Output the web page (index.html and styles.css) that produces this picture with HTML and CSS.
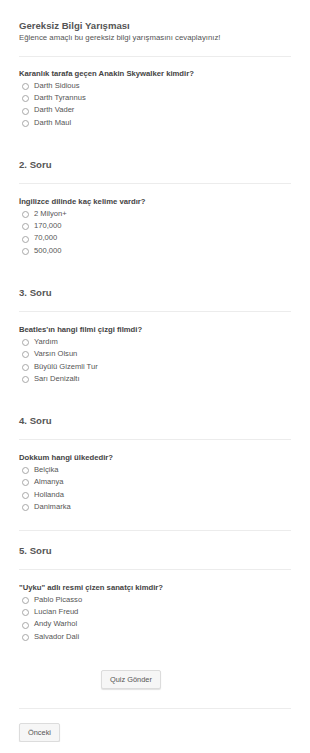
FILE: index.html
```html
<!DOCTYPE html>
<html lang="tr">
  <head>
    <meta charset="UTF-8" />
    <meta name="viewport" content="width=device-width, initial-scale=1.0" />
    <title>Gereksiz Bilgi Yarışması</title>
    <link rel="stylesheet" href="styles.css">
  </head>
  <body>
    <form class="form">
      <div class="form-header">
        <h1>Gereksiz Bilgi Yarışması</h1>
        <p>Eğlence amaçlı bu gereksiz bilgi yarışmasını cevaplayınız!</p>
      </div>
      <hr />

      <div class="question">
        <label class="question-label">Karanlık tarafa geçen Anakin Skywalker kimdir?</label>
        <label class="option"><span class="radio"></span>Darth Sidious</label>
        <label class="option"><span class="radio"></span>Darth Tyrannus</label>
        <label class="option"><span class="radio"></span>Darth Vader</label>
        <label class="option"><span class="radio"></span>Darth Maul</label>
      </div>

      <h2>2. Soru</h2>
      <hr />
      <div class="question">
        <label class="question-label">İngilizce dilinde kaç kelime vardır?</label>
        <label class="option"><span class="radio"></span>2 Milyon+</label>
        <label class="option"><span class="radio"></span>170,000</label>
        <label class="option"><span class="radio"></span>70,000</label>
        <label class="option"><span class="radio"></span>500,000</label>
      </div>

      <h2>3. Soru</h2>
      <hr />
      <div class="question">
        <label class="question-label">Beatles'ın hangi filmi çizgi filmdi?</label>
        <label class="option"><span class="radio"></span>Yardım</label>
        <label class="option"><span class="radio"></span>Varsın Olsun</label>
        <label class="option"><span class="radio"></span>Büyülü Gizemli Tur</label>
        <label class="option"><span class="radio"></span>Sarı Denizaltı</label>
      </div>

      <h2>4. Soru</h2>
      <hr />
      <div class="question">
        <label class="question-label">Dokkum hangi ülkededir?</label>
        <label class="option"><span class="radio"></span>Belçika</label>
        <label class="option"><span class="radio"></span>Almanya</label>
        <label class="option"><span class="radio"></span>Hollanda</label>
        <label class="option"><span class="radio"></span>Danimarka</label>
      </div>

      <hr class="page-break" />
      <h2 class="after-break">5. Soru</h2>
      <hr />
      <div class="question">
        <label class="question-label">"Uyku" adlı resmi çizen sanatçı kimdir?</label>
        <label class="option"><span class="radio"></span>Pablo Picasso</label>
        <label class="option"><span class="radio"></span>Lucian Freud</label>
        <label class="option"><span class="radio"></span>Andy Warhol</label>
        <label class="option"><span class="radio"></span>Salvador Dali</label>
      </div>

      <div class="submit-row">
        <button type="button" class="btn">Quiz Gönder</button>
      </div>
      <hr class="footer-line" />
      <div class="nav-row">
        <button type="button" class="btn">Önceki</button>
      </div>
    </form>
  </body>
</html>
```

FILE: styles.css
```css
body {
  margin: 0;
  background: #fff;
  font-family: "Liberation Sans", Arial, sans-serif;
  color: #555;
}
.form {
  padding: 19px 19px 0;
}
.form-header h1 {
  margin: 0;
  font-size: 9.6px;
  line-height: 13px;
  font-weight: bold;
  color: #555;
}
.form-header p {
  margin: 0;
  font-size: 7.8px;
  line-height: 11px;
  color: #555;
}
hr {
  border: 0;
  border-top: 1px solid #ececec;
  margin: 0;
}
.form-header + hr {
  margin-top: 13px;
}
.question {
  padding-top: 10.5px;
  padding-bottom: 1px;
}
h2 + hr + .question {
  padding-top: 11.5px;
}
.question-label {
  display: block;
  font-size: 7.7px;
  line-height: 11px;
  font-weight: bold;
  color: #444;
  margin-bottom: 1px;
}
.option {
  display: flex;
  align-items: center;
  font-size: 7.6px;
  line-height: 12.4px;
  color: #555;
}
.radio {
  width: 5px;
  height: 5px;
  border: 1px solid #a8a8a8;
  border-radius: 50%;
  margin: 1px 5px 0 3px;
}
h2 {
  margin: 27.5px 0 12.5px;
  font-size: 9.6px;
  line-height: 13px;
  font-weight: bold;
  color: #555;
}
.page-break {
  margin-top: 15px;
}
h2.after-break {
  margin-top: 13px;
}
.submit-row {
  padding: 24px 0 0 82px;
}
.btn {
  height: 19px;
  padding: 0 8px;
  font-family: "Liberation Sans", Arial, sans-serif;
  font-size: 7.4px;
  color: #555;
  background: #f6f6f6;
  border: 1px solid #dcdcdc;
  border-radius: 2px;
  box-shadow: 0 1px 1px rgba(0, 0, 0, 0.12);
}
.footer-line {
  margin-top: 19px;
}
.nav-row {
  padding-top: 12px;
}
.nav-row .btn {
  padding: 0 8px;
}
```
